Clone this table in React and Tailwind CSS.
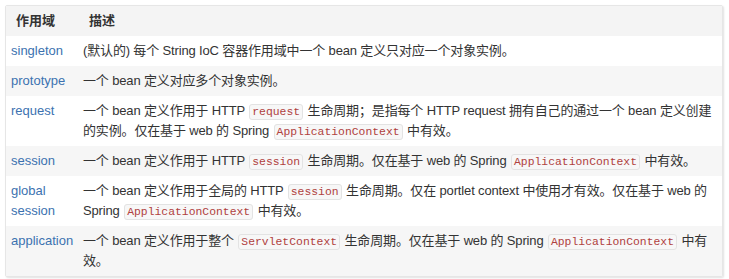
function Code({ children }) {
  return (
    <code className="mx-[1px] rounded-[3px] border border-[#e3e3e3] bg-[#f7f7f7] px-[2px] py-[1px] font-['Liberation_Mono','DejaVu_Sans_Mono',monospace] text-[11.4px] leading-none tracking-normal text-[#b0413e]">
      {children}
    </code>
  );
}

const rows = [
  {
    name: ['singleton'],
    desc: <>(默认的) 每个 String IoC 容器作用域中一个 bean 定义只对应一个对象实例。</>,
  },
  {
    name: ['prototype'],
    desc: <>一个 bean 定义对应多个对象实例。</>,
  },
  {
    name: ['request'],
    desc: (
      <>
        一个 bean 定义作用于 HTTP <Code>request</Code> 生命周期；是指每个 HTTP request 拥有自己的通过一个 bean 定义创建
        <br />
        的实例。仅在基于 web 的 Spring <Code>ApplicationContext</Code> 中有效。
      </>
    ),
  },
  {
    name: ['session'],
    desc: (
      <>
        一个 bean 定义作用于 HTTP <Code>session</Code> 生命周期。仅在基于 web 的 Spring <Code>ApplicationContext</Code> 中有效。
      </>
    ),
  },
  {
    name: ['global', 'session'],
    desc: (
      <>
        一个 bean 定义作用于全局的 HTTP <Code>session</Code> 生命周期。仅在 portlet context 中使用才有效。仅在基于 web 的
        <br />
        Spring <Code>ApplicationContext</Code> 中有效。
      </>
    ),
  },
  {
    name: ['application'],
    desc: (
      <>
        一个 bean 定义作用于整个 <Code>ServletContext</Code> 生命周期。仅在基于 web 的 Spring <Code>ApplicationContext</Code> 中有
        <br />
        效。
      </>
    ),
  },
];

export default function App() {
  return (
    <div className="min-h-[279px] bg-white pl-[5px] pt-[5px] font-['Liberation_Sans','Noto_Sans_CJK_SC',sans-serif] text-[13px] text-[#333]">
      <div className="w-[718px] overflow-hidden rounded-[2px] border border-[#e6e6e6] shadow-[1px_1px_2px_rgba(0,0,0,0.12)]">
        <table className="w-full table-fixed border-collapse">
          <colgroup>
            <col className="w-[72px]" />
            <col />
          </colgroup>
          <thead>
            <tr className="bg-[#f4f4f4]">
              <th className="py-[5px] pl-[10px] text-left font-bold leading-5">作用域</th>
              <th className="py-[5px] pl-[11px] text-left font-bold leading-5">描述</th>
            </tr>
          </thead>
          <tbody>
            {rows.map((row, i) => (
              <tr key={i} className={i % 2 === 1 ? 'bg-[#f6f6f6]' : 'bg-white'}>
                <td className="py-[5px] pl-[5px] align-top leading-5 text-[#3c72b0]">
                  {row.name.map((n, j) => (
                    <div key={j}>{n}</div>
                  ))}
                </td>
                <td className="whitespace-nowrap py-[5px] pl-[5px] align-top leading-5 tracking-[-0.15px]">{row.desc}</td>
              </tr>
            ))}
          </tbody>
        </table>
      </div>
    </div>
  );
}
